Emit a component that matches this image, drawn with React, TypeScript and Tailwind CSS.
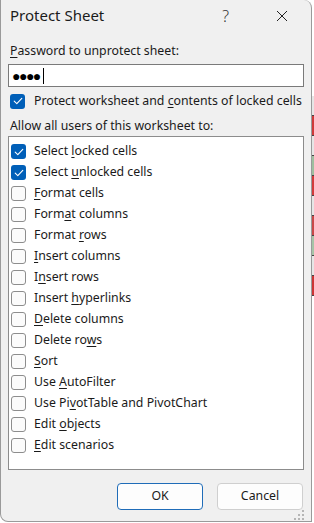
import React from 'react';

type Item = { label: string; u: number; checked?: boolean };

const items: Item[] = [
  { label: 'Select locked cells', u: 7, checked: true },
  { label: 'Select unlocked cells', u: 7, checked: true },
  { label: 'Format cells', u: 0 },
  { label: 'Format columns', u: 4 },
  { label: 'Format rows', u: 7 },
  { label: 'Insert columns', u: 0 },
  { label: 'Insert rows', u: 1 },
  { label: 'Insert hyperlinks', u: 7 },
  { label: 'Delete columns', u: 0 },
  { label: 'Delete rows', u: 9 },
  { label: 'Sort', u: 0 },
  { label: 'Use AutoFilter', u: 4 },
  { label: 'Use PivotTable and PivotChart', u: 6 },
  { label: 'Edit objects', u: 5 },
  { label: 'Edit scenarios', u: 0 },
];

function Mnemonic({ text, u }: { text: string; u: number }) {
  return (
    <span className="whitespace-nowrap">
      {text.slice(0, u)}
      <span className="underline underline-offset-2">{text[u]}</span>
      {text.slice(u + 1)}
    </span>
  );
}

function Check({ checked }: { checked?: boolean }) {
  if (checked) {
    return (
      <span className="flex h-[15px] w-[15px] shrink-0 items-center justify-center rounded-[3px] bg-[#005fb8]">
        <svg width="10" height="8" viewBox="0 0 10 8" fill="none">
          <path d="M1.2 4.2 3.8 6.6 8.8 1.4" stroke="white" strokeWidth="1.1" strokeLinecap="round" strokeLinejoin="round" />
        </svg>
      </span>
    );
  }
  return <span className="h-[15px] w-[15px] shrink-0 rounded-[3px] border border-[#8d8d8d] bg-[#fbfbfb]" />;
}

// strip of the worksheet visible behind the dialog
const strip = ['#e6e6e6', '#cf3a3a', '#e6e6e6', '#9fbf9f', '#d23b3b', '#e6e6e6', '#c94848', '#a7c4a7', '#e6e6e6', '#cc3535'];

export default function App() {
  return (
    <div className="flex h-[523px] w-[314px] bg-white" style={{ fontFamily: '"Noto Sans", "Open Sans", sans-serif' }}>
      <div className="flex h-[522px] w-[312px] shrink-0 flex-col rounded-tr-[8px] rounded-bl-[8px] border-l border-r border-b border-[#9a9a9a] bg-[#f0f0f0] text-[12.3px] text-[#1a1a1a]">
        {/* title bar */}
        <div className="flex h-[40px] items-center pl-[9px]">
          <span className="text-[15px] text-[#1b1b1b]">Protect Sheet</span>
          <span className="ml-auto mr-[47px] text-[16px] font-light text-[#333]">?</span>
          <svg className="mr-[23px]" width="12" height="12" viewBox="0 0 12 12">
            <path d="M1 1 11 11M11 1 1 11" stroke="#222" strokeWidth="1" />
          </svg>
        </div>

        <div className="flex flex-1 flex-col px-[7px]">
          <div className="mt-[11px] pl-[2px] leading-[18px]">
            <Mnemonic text="Password to unprotect sheet:" u={0} />
          </div>
          <div className="mt-[4px] flex h-[23px] items-center border border-[#7a7a7a] bg-white pl-[3px]">
            <span className="text-[14px] leading-none tracking-[-1.5px] text-black">●●●●</span>
            <span className="ml-[3px] h-[16px] w-px bg-black" />
          </div>

          <div className="mt-[6px] flex items-center gap-[9px] pl-[2px] leading-[16px]">
            <Check checked />
            <Mnemonic text="Protect worksheet and contents of locked cells" u={22} />
          </div>

          <div className="mt-[9px] pl-[2px] leading-[16px]">Allow all users of this worksheet to:</div>

          <div className="mt-[2px] h-[334px] border border-[#8c8c8c] bg-white pt-[4px]">
            {items.map((it) => (
              <div key={it.label} className="flex h-[21px] items-center gap-[8px] pl-[2px]">
                <Check checked={it.checked} />
                <Mnemonic text={it.label} u={it.u} />
              </div>
            ))}
          </div>

          <div className="mt-[13px] flex justify-end gap-[14px] pr-[1px]">
            <button className="h-[27px] w-[86px] rounded-[4px] border border-[#1f6cb8] bg-[#fdfdfd] text-[12.3px] text-[#1a1a1a]">OK</button>
            <button className="h-[27px] w-[86px] rounded-[4px] border border-[#cfcfcf] bg-[#fdfdfd] text-[12.3px] text-[#1a1a1a]">Cancel</button>
          </div>

          <div className="mt-auto flex justify-end pb-[1px]">
            <svg width="10" height="10" viewBox="0 0 10 10">
              <g fill="#b5b5b5">
                <rect x="8" y="0" width="2" height="2" />
                <rect x="4" y="4" width="2" height="2" />
                <rect x="8" y="4" width="2" height="2" />
                <rect x="0" y="8" width="2" height="2" />
                <rect x="4" y="8" width="2" height="2" />
                <rect x="8" y="8" width="2" height="2" />
              </g>
            </svg>
          </div>
        </div>
      </div>
      <div className="flex w-[2px] flex-col pt-[96px]">
        {strip.map((c, i) => (
          <div key={i} className="h-[20px] border-b border-[#444]" style={{ backgroundColor: c }} />
        ))}
      </div>
    </div>
  );
}
